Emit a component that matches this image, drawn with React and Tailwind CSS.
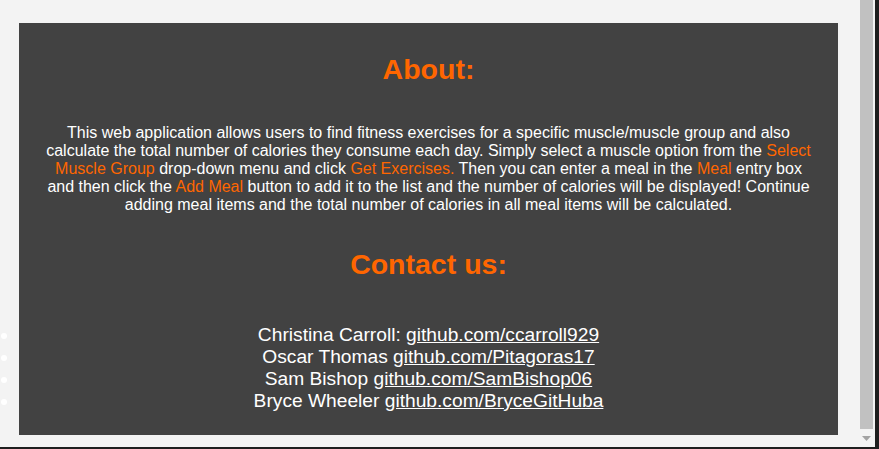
import React from 'react';

const ORANGE = 'text-[#ff6600]';

const CONTACTS = [
  { name: 'Christina Carroll:', link: 'github.com/ccarroll929' },
  { name: 'Oscar Thomas', link: 'github.com/Pitagoras17' },
  { name: 'Sam Bishop', link: 'github.com/SamBishop06' },
  { name: 'Bryce Wheeler', link: 'github.com/BryceGitHuba' },
];

export default function App() {
  return (
    <div className="flex h-[449px] w-[879px] flex-col overflow-hidden bg-[#1e1e1e] font-['Liberation_Sans',Arial,sans-serif]">
      <div className="flex min-h-0 flex-1">
        {/* Page */}
        <div className="flex-1 bg-[#f3f3f3] pl-[19px] pr-[20px] pt-[23px]">
          <section className="bg-[#424242] px-[25px] pb-[23px] pt-[30px] text-center text-white">
            <h1 className={`text-[28.5px] font-bold leading-[32px] ${ORANGE}`}>About:</h1>
            <p className="mt-[39px] text-[16px] leading-[18px]">
              This web application allows users to find fitness exercises for a specific muscle/muscle group and also
              calculate the total number of calories they consume each day. Simply select a muscle option from the{' '}
              <span className={ORANGE}>Select Muscle Group</span> drop-down menu and click{' '}
              <span className={ORANGE}>Get Exercises.</span> Then you can enter a meal in the{' '}
              <span className={ORANGE}>Meal</span> entry box and then click the{' '}
              <span className={ORANGE}>Add Meal</span> button to add it to the list and the number of calories will be
              displayed! Continue adding meal items and the total number of calories in all meal items will be
              calculated.
            </p>

            <h1 className={`mt-[34px] text-[28.5px] font-bold leading-[32px] ${ORANGE}`}>Contact us:</h1>
            <ul className="-mx-[25px] mt-[44px] list-disc text-[19.2px] leading-[22px]">
              {CONTACTS.map((c) => (
                <li key={c.link}>
                  {c.name} <a href="#" className="text-white underline">{c.link}</a>
                </li>
              ))}
            </ul>
          </section>
        </div>

        {/* Scrollbar */}
        <div className="flex w-[17px] flex-col bg-[#f3f3f3]">
          <div className="mx-[2px] flex-1 bg-[#c1c1c1]" />
          <div className="flex h-[18px] items-center justify-center">
            <svg width="9" height="5" viewBox="0 0 9 5">
              <path d="M0 0h9L4.5 5z" fill="#a3a3a3" />
            </svg>
          </div>
        </div>
        <div className="w-[4px]" />
      </div>
      <div className="h-[2px]" />
    </div>
  );
}
